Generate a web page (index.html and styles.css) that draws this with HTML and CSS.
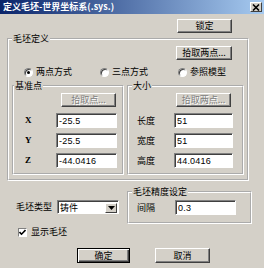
FILE: index.html
```html
<!DOCTYPE html>
<html lang="zh-CN">
<head>
<meta charset="utf-8">
<title>定义毛坯</title>
<link rel="stylesheet" href="styles.css">
</head>
<body>
<div class="titlebar">
  <span class="title">定义毛坯-世界坐标系(.sys.)</span>
  <span class="close"><svg width="8" height="7" viewBox="0 0 8 7"><path d="M1 0.5 L7 6.5 M7 0.5 L1 6.5" stroke="#000" stroke-width="1.6"/></svg></span>
</div>
<div class="lock-row"><button class="btn btn-wide">锁定</button></div>
<fieldset class="group group-main">
  <legend>毛坯定义</legend>
  <div class="pick-row"><button class="btn btn-pick">拾取两点...</button></div>
  <div class="radio-row">
    <label class="radio r1"><span class="dot checked"></span>两点方式</label>
    <label class="radio r2"><span class="dot"></span>三点方式</label>
    <label class="radio r3"><span class="dot"></span>参照模型</label>
  </div>
  <div class="sub-row">
    <fieldset class="group group-base">
      <legend class="legend-base">基准点</legend>
      <div class="sub-pick base-pick"><button class="btn btn-wide disabled">拾取点...</button></div>
      <div class="fields base-fields">
        <span class="lbl coord">X</span><input class="field" type="text" value="-25.5">
        <span class="lbl coord">Y</span><input class="field" type="text" value="-25.5">
        <span class="lbl coord">Z</span><input class="field" type="text" value="-44.0416">
      </div>
    </fieldset>
    <fieldset class="group group-size">
      <legend>大小</legend>
      <div class="sub-pick size-pick"><button class="btn btn-wide disabled">拾取两点...</button></div>
      <div class="fields size-fields">
        <span class="lbl">长度</span><input class="field" type="text" value="51">
        <span class="lbl">宽度</span><input class="field" type="text" value="51">
        <span class="lbl">高度</span><input class="field" type="text" value="44.0416">
      </div>
    </fieldset>
  </div>
</fieldset>
<div class="bottom-row">
  <div class="type-col">
    <span class="type-lbl">毛坯类型</span>
    <div class="select"><span class="select-text">铸件</span><span class="select-btn"><svg width="7" height="4" viewBox="0 0 7 4"><path d="M0 0 H7 L3.5 4 Z" fill="#000"/></svg></span></div>
  </div>
  <fieldset class="group group-prec">
    <legend>毛坯精度设定</legend>
    <div class="prec-row"><span class="prec-lbl">间隔</span><input class="field prec-field" type="text" value="0.3"></div>
  </fieldset>
</div>
<label class="check-row"><span class="check"><svg width="7" height="7" viewBox="0 0 7 7"><path d="M0.5 3 L2.5 5.2 L6.5 1" stroke="#000" stroke-width="1.6" fill="none"/></svg></span>显示毛坯</label>
<div class="actions">
  <button class="btn btn-default">确定</button>
  <button class="btn btn-cancel">取消</button>
</div>
</body>
</html>
```

FILE: styles.css
```css
* { box-sizing: border-box; }
html, body { margin: 0; padding: 0; }
body {
  width: 264px;
  height: 268px;
  overflow: hidden;
  background: #d4d0c8;
  font-family: "Noto Sans CJK SC", "Noto Sans", sans-serif;
  font-size: 9px;
  line-height: 10px;
  color: #000;
}
.titlebar {
  height: 14px;
  background: linear-gradient(to right, #0a246a, #a6caf0);
  display: flex;
  align-items: center;
  justify-content: space-between;
  padding: 0 2px 0 3px;
}
.title { color: #fff; font-weight: bold; white-space: nowrap; }
.close {
  width: 12px;
  height: 10px;
  background: #d4d0c8;
  border: 1px solid;
  border-color: #fff #404040 #404040 #fff;
  display: flex;
  align-items: center;
  justify-content: center;
}
.btn {
  height: 14px;
  padding: 0;
  margin: 0;
  font: inherit;
  line-height: 12px;
  color: #000;
  background: #d4d0c8;
  border: 1px solid;
  border-color: #fff #404040 #404040 #fff;
  box-shadow: inset -1px -1px #808080;
  display: flex;
  align-items: center;
  justify-content: center;
}
.btn.disabled { color: #808080; text-shadow: 1px 1px #fff; }
.btn-wide { width: 55px; }
.btn-pick { width: 56px; }
.lock-row { display: flex; justify-content: flex-end; padding: 5px 32px 0 0; }

.group {
  margin: 0;
  padding: 0;
  min-width: 0;
  border: 2px groove #fff;
}
.group legend {
  padding: 0 1px;
  margin-left: 3px;
  height: 10px;
  line-height: 10px;
}
.group .legend-base { margin-left: 0; }
.group-main { margin: 1px 0 0 7px; width: 242px; padding-bottom: 4px; }
.pick-row { display: flex; justify-content: flex-end; padding-right: 15px; margin-top: 2px; }
.radio-row { display: flex; align-items: center; height: 10px; margin-top: 7px; padding-left: 15px; }
.radio { display: flex; align-items: center; gap: 3px; }
.r1 { width: 76px; }
.r2 { width: 78px; }
.dot {
  width: 9px;
  height: 9px;
  border-radius: 50%;
  background: #fff;
  border: 1px solid;
  border-color: #808080 #fff #fff #808080;
  box-shadow: inset 1px 1px #404040;
  display: flex;
  align-items: center;
  justify-content: center;
}
.dot.checked::after {
  content: "";
  width: 3px;
  height: 3px;
  border-radius: 50%;
  background: #000;
}
.sub-row { display: flex; gap: 3px; margin-top: 4px; padding-left: 3px; }
.group-base { width: 112px; padding-bottom: 5px; }
.group-size { width: 117px; padding-bottom: 5px; }
.sub-pick { display: flex; justify-content: flex-end; margin-top: 2px; }
.base-pick { padding-right: 6px; }
.size-pick { padding-right: 11px; }
.fields { display: grid; row-gap: 5px; margin-top: 6px; align-items: center; }
.base-fields { grid-template-columns: 42px 61px; }
.size-fields { grid-template-columns: 45px 59px; }
.lbl { line-height: 15px; padding-left: 8px; }
.coord { padding-left: 11px; font-family: "Liberation Serif", serif; font-weight: bold; font-size: 9px; }
.field {
  height: 15px;
  width: 100%;
  margin: 0;
  padding: 0 0 0 2px;
  background: #fff;
  border: 1px solid;
  border-color: #808080 #fff #fff #808080;
  box-shadow: inset 1px 1px #404040;
  font-family: "Liberation Sans", sans-serif;
  font-size: 9px;
  letter-spacing: 0.2px;
  color: #000;
  outline: none;
}
.bottom-row { display: flex; margin-top: 6px; }
.type-col { width: 127px; display: flex; align-items: center; gap: 5px; padding: 13px 0 0 16px; align-self: flex-start; }
.type-lbl { width: 36px; white-space: nowrap; }
.select {
  width: 62px;
  height: 14px;
  display: flex;
  align-items: center;
  justify-content: space-between;
  background: #fff;
  border: 1px solid;
  border-color: #808080 #fff #fff #808080;
  box-shadow: inset 1px 1px #404040;
  padding: 1px 1px 0 2px;
}
.select-btn {
  width: 12px;
  height: 10px;
  background: #d4d0c8;
  border: 1px solid;
  border-color: #fff #404040 #404040 #fff;
  display: flex;
  align-items: center;
  justify-content: center;
}
.group-prec { width: 125px; padding-bottom: 7px; }
.prec-row { display: flex; align-items: center; margin-top: 3px; padding-left: 8px; }
.prec-lbl { width: 38px; }
.prec-field { width: 61px; }
.check-row { display: flex; align-items: center; gap: 4px; height: 10px; margin-top: 3px; padding-left: 18px; }
.check {
  width: 9px;
  height: 9px;
  background: #fff;
  border: 1px solid;
  border-color: #808080 #fff #fff #808080;
  display: flex;
  align-items: center;
  justify-content: center;
}
.actions { display: flex; gap: 25px; margin-top: 11px; padding-left: 77px; }
.btn-default {
  width: 53px;
  height: 15px;
  border: 1px solid #000;
  box-shadow: inset 1px 1px #fff, inset -1px -1px #404040, inset -2px -2px #808080;
}
.btn-cancel { width: 55px; height: 15px; }
```
